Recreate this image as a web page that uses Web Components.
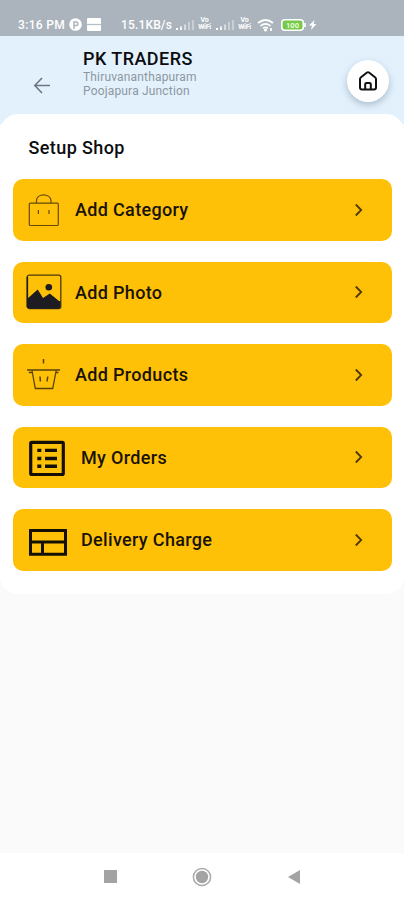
<!DOCTYPE html>
<html lang="en"><head><meta charset="utf-8"><title>Setup Shop</title>
<style>
html,body{margin:0;height:100%}
body{background:#fafafa;font-family:Roboto,"Liberation Sans",sans-serif;color:#0b0c0e;overflow:hidden}
</style></head><body>
<shop-app></shop-app>
<script>
const define=(name,html)=>customElements.define(name,class extends HTMLElement{
  constructor(){super();this.attachShadow({mode:'open'}).innerHTML=html;}
});
const ICONS={
 bag:`<svg width="34" height="38" viewBox="0 0 34 38" fill="none" stroke="#664b08" stroke-width="1.2"><rect x="3.3" y="12.2" width="29" height="22.3" rx="1"/><path d="M10.500 12V9.500C11 2 24 2 25 9.500V12M12.400 19v4M23 19v4"/></svg>`,
 photo:`<svg width="36" height="38" viewBox="0 0 36 38"><rect x="1.200" y="2.200" width="33.600" height="33.300" rx="2" fill="none" stroke="#4a3a0b" stroke-width="1.300"/><path d="M1 26L11.700 16.500l5.300 8.500 6.800-4.500L33 28h1.500v5q0 2.800-3 2.800H3.500Q1 35.800 1 33Z" fill="#1d1c22"/><circle cx="22.800" cy="14.300" r="3.300" fill="#1d1c22"/><path d="M1.400 4v30" stroke="#1d1c22" stroke-width="1.500"/></svg>`,
 basket:`<svg width="36" height="38" viewBox="0 0 36 38" fill="none" stroke="#5a430a" stroke-width="1.300"><path d="M17.500 3v4.500" stroke-width="1.500"/><path d="M1 14h33" stroke-width="1.800" stroke="#82610a"/><path d="M6 14.500l3.300 18h17.400l3.500-18M2.800 16.500H6M30 16.500h2.500"/><path d="M14 20.500l.4 5M21.800 20.500l-.800 5" stroke-width="1.500"/></svg>`,
 list:`<svg width="36" height="38" viewBox="0 0 36 38"><rect x="1.700" y="4.400" width="32.600" height="32.200" rx="1" fill="none" stroke="#151006" stroke-width="3.200"/><path d="M8.300 12.400h4M8.300 20.500h4M8.300 28.300h4M16 12.400h12M16 20.500h12M16 28.300h12" stroke="#151006" stroke-width="3.400"/></svg>`,
 table:`<svg width="38" height="38" viewBox="0 0 38 38" fill="none" stroke="#151006" stroke-width="3"><path d="M1.500 9.500h35v23.800h-35ZM1.500 21h35M13.500 21v12"/></svg>`
};
const signal=`<svg width="18" height="12" viewBox="0 0 18 12" fill="#fff"><path d="M0 9h2v2H0z"/><path d="M4 7.500h2V11H4z" opacity=".85"/><path d="M8 5.500h2V11H8z" opacity=".55"/><path d="M12 3h2v8h-2zM16 1h2v10h-2z" opacity=".38"/></svg>`;
define('status-bar',`<style>
:host{display:flex;height:36px;background:#abb4bc;color:#fff;font-size:12px;line-height:14px;box-sizing:border-box;padding:18px 0 0 18px;align-items:flex-start}
:host>*{flex:none}svg{display:block}.time{width:48px;font-weight:500;letter-spacing:.350px;white-space:nowrap}.p{margin-left:3px}.card{margin-left:5px}.rate{margin-left:20px;width:53px;font-weight:500;letter-spacing:.150px;white-space:nowrap}
.sig{margin:1px 0 0 2px}.vo{width:15px;margin:-1px 0 0 3px;font-size:7px;line-height:7px;font-weight:700;text-align:center;letter-spacing:-.3px}.s2{margin-left:4px}.wifi{margin-left:5px}.bat{margin:1px 0 0 7px}.bolt{margin:1px 0 0 3px}
</style><span class="time">3:16 PM</span>
<svg class="p" width="13" height="13" viewBox="0 0 13 13"><circle cx="6.500" cy="6.500" r="6.300" fill="#fff"/><path d="M5 11V4h3q2 2 0 3.500H5" fill="none" stroke="#abb4bc" stroke-width="1.500"/></svg>
<svg class="card" width="14" height="13"><rect width="14" height="13" rx="1" fill="#fff"/><path d="M0 6.500h14" stroke="#b7bfc6" stroke-width="1.300"/></svg>
<span class="rate">15.1KB/s</span><span class="sig">${signal}</span><span class="vo">Vo<br>WiFi</span><span class="sig s2">${signal}</span><span class="vo">Vo<br>WiFi</span>
<svg class="wifi" width="17" height="14" viewBox="0 0 17 14" fill="none" stroke="#fff" stroke-width="1.700"><path d="M1 5q7.500-6 15 0M3.500 7.800q5-4 10 0M6 10.300q2.500-2 5 0"/><circle cx="8.500" cy="12" r=".7" fill="#fff"/><path d="M14 10v3" /></svg>
<svg class="bat" width="25" height="12" viewBox="0 0 25 12"><rect x=".8" y=".8" width="21.500" height="10.400" rx="3" fill="#77c94c" stroke="#fff" stroke-width="1.600"/><path d="M24 4v4" stroke="#fff" stroke-width="1.600"/><text x="11.500" y="8.800" font-size="7.500" font-weight="700" text-anchor="middle" fill="#e9ffd9">100</text></svg>
<svg class="bolt" width="8" height="12" viewBox="0 0 8 12"><path d="M5.500 1L0 6.500h3L2 11l5.500-6H4.600Z" fill="#fff"/></svg>`);
define('shop-header',`<style>
:host{display:flex;box-sizing:border-box;height:88px;background:#e3f1fd;padding-left:33px}
svg{display:block}.back{margin-top:40px;width:50px}.info{flex:1;padding-top:12px}
h1{font-size:18px;line-height:22px;font-weight:500;margin:0;letter-spacing:.450px;white-space:nowrap}
p{margin:0;font-size:12px;line-height:14px;color:#8d979f;font-weight:400;white-space:nowrap;letter-spacing:.170px}
.home{width:42px;height:42px;margin:24px 15px 0 0;border-radius:50%;background:#fff;box-shadow:0 3px 7px #56708466;display:grid;place-items:center}
</style><div class="back"><svg width="18" height="18" viewBox="0 0 18 18" fill="none" stroke="#6d7880" stroke-width="1.600"><path d="M17 9.500H2M9 2L1.800 9.500 9 17"/></svg></div>
<div class="info"><h1>PK TRADERS</h1><p><slot name="one"></slot></p><p><slot name="two"></slot></p></div>
<div class="home"><svg width="20" height="20" viewBox="0 0 20 20" fill="none" stroke="#111" stroke-width="2" stroke-linejoin="round"><path d="M2 8Q2 7 3 6.200L9 1.500q1-.7 2 0l6 4.700Q18 7 18 8v8.500q0 2-2 2H4q-2 0-2-2ZM7.200 18.200v-5q0-1.200 1.200-1.200h3.200q1.200 0 1.200 1.200v5"/></svg></div>`);
customElements.define('menu-tile',class extends HTMLElement{
 connectedCallback(){if(this.shadowRoot)return;this.attachShadow({mode:'open'}).innerHTML=`<style>
:host{display:flex;align-items:center;box-sizing:border-box;height:61.500px;border-radius:10px;background:#ffc107;padding:0 28px 0 13px}
.icon{width:var(--label,49px);flex:none}svg{display:block}.label{flex:1;padding-top:1px;font-size:18px;line-height:24px;font-weight:500;letter-spacing:.330px;white-space:nowrap;color:#181306}
</style><span class="icon">${ICONS[this.getAttribute('icon')]}</span><span class="label"><slot></slot></span><svg width="11" height="14" viewBox="0 0 11 14"><path d="M2.800 1.500L8.200 7l-5.400 5.500" fill="none" stroke="#4c3905" stroke-width="1.800"/></svg>`}
});
define('setup-card',`<style>
:host{display:block;box-sizing:border-box;height:479.500px;margin-top:-10px;background:#fff;border-radius:18px;padding:22px 12px 0 13px;position:relative}
h2{margin:0 0 19px 15.500px;font-size:18px;line-height:24px;font-weight:500;letter-spacing:.4px}.tiles{display:grid;gap:21px}
</style><h2>Setup Shop</h2><div class="tiles"><slot></slot></div>`);
define('nav-bar',`<style>
:host{display:grid;grid-template-columns:90px 94px 90px;justify-content:center;align-items:center;justify-items:center;height:47px;background:#fff}
svg{display:block}
</style><svg width="13" height="13"><rect width="13" height="13" fill="#a3a3a3"/></svg><svg width="20" height="20"><circle cx="10" cy="10" r="8.600" fill="#fff" stroke="#aaa" stroke-width="1.500"/><circle cx="10" cy="10" r="6.200" fill="#a3a3a3"/></svg><svg width="12" height="14"><path d="M12 0v14L0 7Z" fill="#a3a3a3"/></svg>`);
define('shop-app',`<style>
:host{display:flex;flex-direction:column;height:900px}nav-bar{margin-top:auto}
.w{--label:52px;padding-left:16px}
</style><status-bar></status-bar><shop-header><span slot="one">Thiruvananthapuram</span><span slot="two">Poojapura Junction</span></shop-header>
<setup-card><menu-tile icon="bag">Add Category</menu-tile><menu-tile icon="photo">Add Photo</menu-tile><menu-tile icon="basket">Add Products</menu-tile><menu-tile class="w" icon="list">My Orders</menu-tile><menu-tile class="w" icon="table">Delivery Charge</menu-tile></setup-card><nav-bar></nav-bar>`);
</script></body></html>
